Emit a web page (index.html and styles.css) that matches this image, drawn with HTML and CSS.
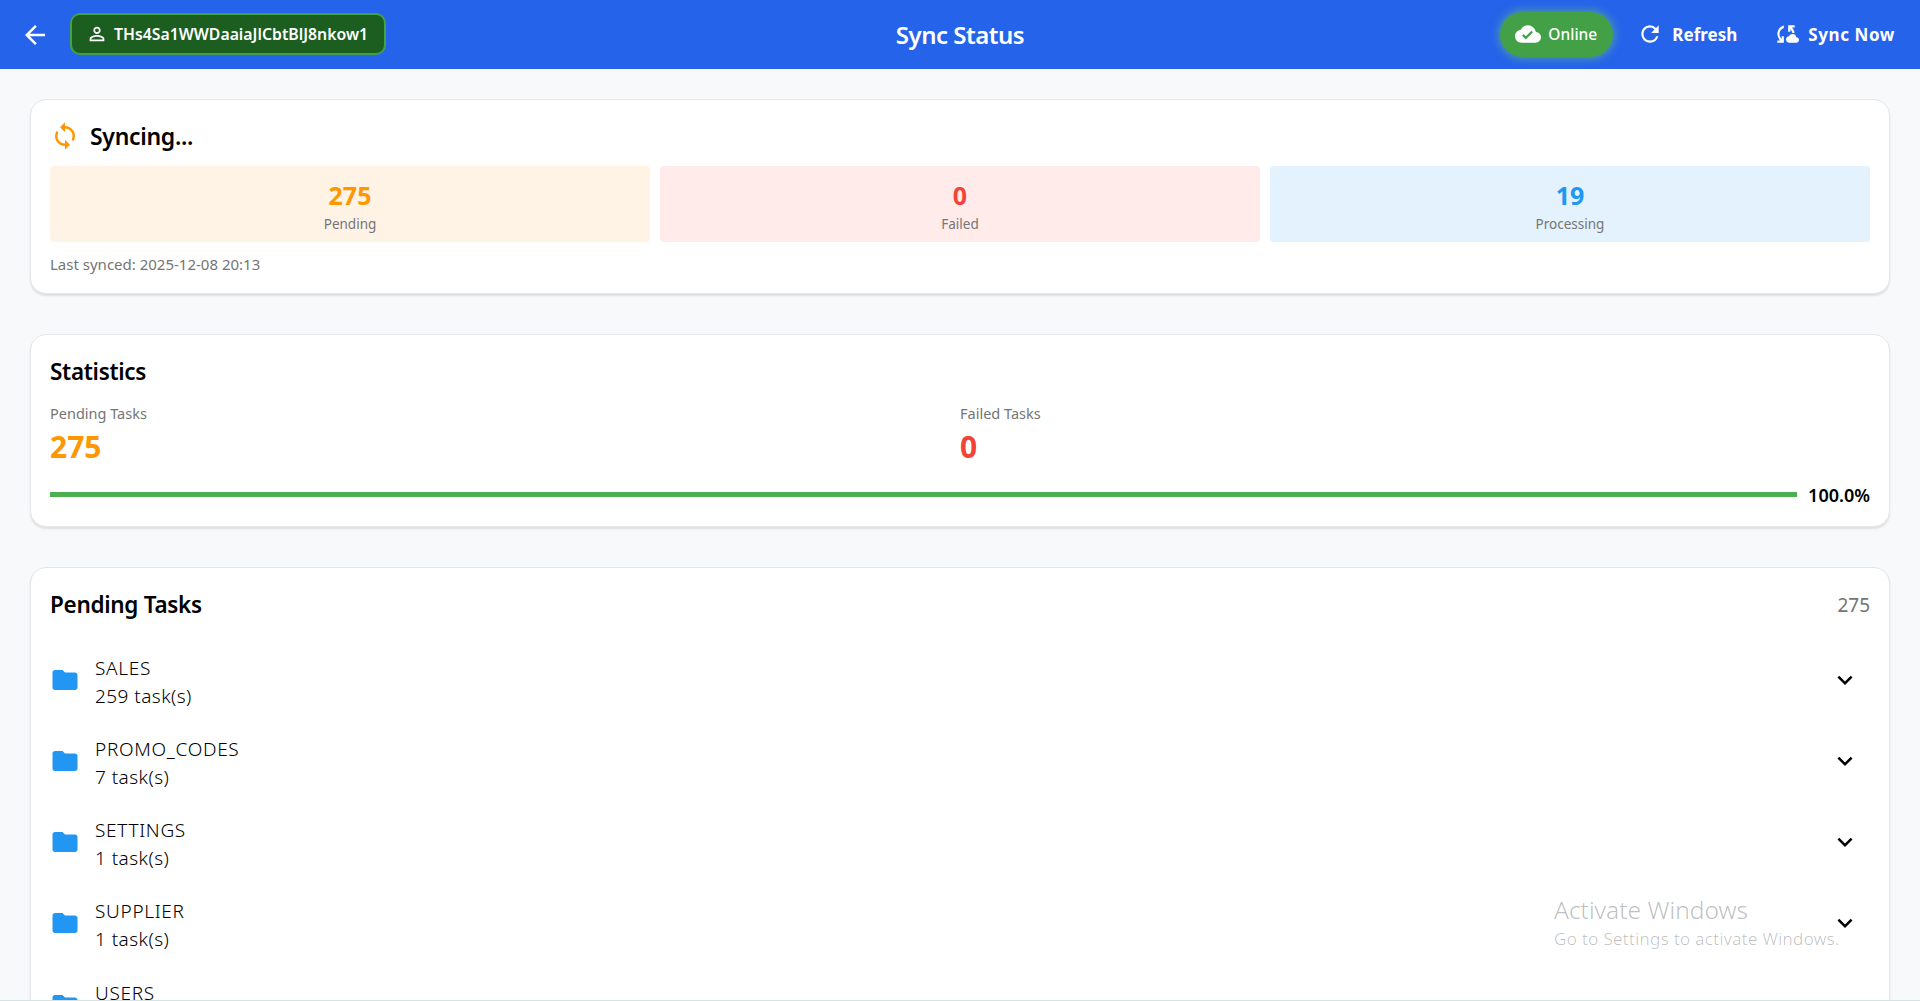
FILE: index.html
```html
<!DOCTYPE html>
<html lang="en">
<head>
<meta charset="utf-8">
<title>Sync Status</title>
<link rel="stylesheet" href="styles.css">
</head>
<body>
<div class="app">
<header class="topbar">
  <div class="bar-left">
    <svg class="ic-back" viewBox="0 0 24 24"><path d="M20 11H7.83l5.59-5.59L12 4l-8 8 8 8 1.41-1.41L7.83 13H20z"/></svg>
    <div class="user-chip">
      <svg class="ic-user" viewBox="0 0 24 24"><path d="M12 5.9a2.1 2.1 0 1 1 0 4.2 2.1 2.1 0 0 1 0-4.2m0 9c2.97 0 6.1 1.46 6.1 2.1v1.1H5.9V17c0-.64 3.13-2.1 6.1-2.1M12 4C9.79 4 8 5.79 8 8s1.79 4 4 4 4-1.79 4-4-1.79-4-4-4zm0 9c-2.67 0-8 1.34-8 4v3h16v-3c0-2.66-5.33-4-8-4z"/></svg>
      <span>THs4Sa1WWDaaiaJlCbtBlJ8nkow1</span>
    </div>
  </div>
  <h1 class="title">Sync Status</h1>
  <div class="bar-right">
    <div class="online">
      <svg class="ic-cloud" viewBox="0 0 24 24"><path d="M19.35 10.04A7.49 7.49 0 0 0 12 4C9.11 4 6.6 5.64 5.35 8.04A5.994 5.994 0 0 0 0 14c0 3.31 2.69 6 6 6h13c2.76 0 5-2.24 5-5 0-2.64-2.05-4.78-4.65-4.96zM10 17l-3.5-3.5 1.41-1.41L10 14.17l5.18-5.18 1.41 1.41L10 17z"/></svg>
      <span>Online</span>
    </div>
    <div class="action action-refresh">
      <svg class="ic-act" viewBox="0 0 24 24"><path d="M17.65 6.35A7.958 7.958 0 0 0 12 4c-4.42 0-7.99 3.58-7.99 8s3.57 8 7.99 8c3.73 0 6.84-2.55 7.73-6h-2.08A5.99 5.99 0 0 1 12 18c-3.31 0-6-2.69-6-6s2.69-6 6-6c1.66 0 3.14.69 4.22 1.78L13 11h7V4l-2.35 2.35z"/></svg>
      <span>Refresh</span>
    </div>
    <div class="action action-sync">
      <svg class="ic-act" viewBox="0 0 24 24"><path d="M21.5 14.98c-.02 0-.03 0-.05.01A3.5 3.5 0 0 0 18.01 12c-1.4 0-2.6.83-3.16 2.02C13.26 14.1 12 15.4 12 17c0 1.66 1.34 3 3 3l6.5-.02c1.38 0 2.5-1.12 2.5-2.5s-1.12-2.5-2.5-2.5zM10 4.26v2.09C7.67 7.18 6 9.39 6 12c0 1.77.78 3.34 2 4.44V14h2v6H4v-2h2.73A7.99 7.99 0 0 1 4 12c0-3.73 2.55-6.85 6-7.74zM20 6h-2.73c1.43 1.26 2.41 3.01 2.66 5h-2.02A6 6 0 0 0 16 7.56V10h-2V4h6v2z"/></svg>
      <span>Sync Now</span>
    </div>
  </div>
</header>
<main class="content">
  <section class="card card-status">
    <div class="status-head">
      <svg class="ic-syncing" viewBox="0 0 24 24"><path d="M12 4V1L8 5l4 4V6c3.31 0 6 2.69 6 6 0 1.01-.25 1.97-.7 2.8l1.46 1.46A7.93 7.93 0 0 0 20 12c0-4.42-3.58-8-8-8zm0 14c-3.31 0-6-2.69-6-6 0-1.01.25-1.97.7-2.8L5.24 7.74A7.93 7.93 0 0 0 4 12c0 4.42 3.58 8 8 8v3l4-4-4-4v3z"/></svg>
      <h2 class="h-status">Syncing...</h2>
    </div>
    <div class="tiles">
      <div class="tile tile-orange"><div class="tile-num">275</div><div class="tile-label">Pending</div></div>
      <div class="tile tile-red"><div class="tile-num">0</div><div class="tile-label">Failed</div></div>
      <div class="tile tile-blue"><div class="tile-num">19</div><div class="tile-label">Processing</div></div>
    </div>
    <div class="last">Last synced: 2025-12-08 20:13</div>
  </section>
  <section class="card card-stats">
    <h2 class="h-card">Statistics</h2>
    <div class="stats">
      <div class="stat"><div class="stat-label">Pending Tasks</div><div class="stat-num num-orange">275</div></div>
      <div class="stat"><div class="stat-label">Failed Tasks</div><div class="stat-num num-red">0</div></div>
    </div>
    <div class="progress"><div class="track"></div><span class="pct">100.0%</span></div>
  </section>
  <section class="card card-tasks">
    <div class="tasks-head"><h2 class="h-card">Pending Tasks</h2><span class="count">275</span></div>
    <div class="row"><svg class="ic-folder" viewBox="0 0 24 24"><path d="M10 4H4c-1.1 0-1.99.9-1.99 2L2 18c0 1.1.9 2 2 2h16c1.1 0 2-.9 2-2V8c0-1.1-.9-2-2-2h-8l-2-2z"/></svg><div class="row-text"><div class="row-name">SALES</div><div>259 task(s)</div></div><svg class="ic-chev" viewBox="0 0 24 24"><path d="M16.59 8.59 12 13.17 7.41 8.59 6 10l6 6 6-6z"/></svg></div>
    <div class="row"><svg class="ic-folder" viewBox="0 0 24 24"><path d="M10 4H4c-1.1 0-1.99.9-1.99 2L2 18c0 1.1.9 2 2 2h16c1.1 0 2-.9 2-2V8c0-1.1-.9-2-2-2h-8l-2-2z"/></svg><div class="row-text"><div class="row-name">PROMO_CODES</div><div>7 task(s)</div></div><svg class="ic-chev" viewBox="0 0 24 24"><path d="M16.59 8.59 12 13.17 7.41 8.59 6 10l6 6 6-6z"/></svg></div>
    <div class="row"><svg class="ic-folder" viewBox="0 0 24 24"><path d="M10 4H4c-1.1 0-1.99.9-1.99 2L2 18c0 1.1.9 2 2 2h16c1.1 0 2-.9 2-2V8c0-1.1-.9-2-2-2h-8l-2-2z"/></svg><div class="row-text"><div class="row-name">SETTINGS</div><div>1 task(s)</div></div><svg class="ic-chev" viewBox="0 0 24 24"><path d="M16.59 8.59 12 13.17 7.41 8.59 6 10l6 6 6-6z"/></svg></div>
    <div class="row"><svg class="ic-folder" viewBox="0 0 24 24"><path d="M10 4H4c-1.1 0-1.99.9-1.99 2L2 18c0 1.1.9 2 2 2h16c1.1 0 2-.9 2-2V8c0-1.1-.9-2-2-2h-8l-2-2z"/></svg><div class="row-text"><div class="row-name">SUPPLIER</div><div>1 task(s)</div></div><svg class="ic-chev" viewBox="0 0 24 24"><path d="M16.59 8.59 12 13.17 7.41 8.59 6 10l6 6 6-6z"/></svg></div>
    <div class="row"><svg class="ic-folder" viewBox="0 0 24 24"><path d="M10 4H4c-1.1 0-1.99.9-1.99 2L2 18c0 1.1.9 2 2 2h16c1.1 0 2-.9 2-2V8c0-1.1-.9-2-2-2h-8l-2-2z"/></svg><div class="row-text"><div class="row-name">USERS</div><div>1 task(s)</div></div><svg class="ic-chev" viewBox="0 0 24 24"><path d="M16.59 8.59 12 13.17 7.41 8.59 6 10l6 6 6-6z"/></svg></div>
  </section>
</main>
</div>
<div class="watermark"><div class="wm-title">Activate Windows</div><div class="wm-sub">Go to Settings to activate Windows.</div></div>
<div class="bottom-line"></div>
</body>
</html>
```
FILE: styles.css
```css
* { box-sizing: border-box; }
html, body { margin: 0; height: 100%; overflow: hidden; }
body { background: #f8f9fb; font-family: "Noto Sans", "Open Sans", sans-serif; color: #000; }
.app { display: flex; flex-direction: column; height: 1001px; overflow: hidden; }
.topbar { flex: none; height: 69px; background: #2563eb; color: #fff; display: grid; grid-template-columns: 1fr auto 1fr; align-items: center; padding: 0 25px; }
.bar-left, .bar-right { display: flex; align-items: center; }
.bar-right { justify-content: flex-end; }
.ic-back { width: 30px; height: 30px; fill: #fff; margin: 0 20px 0 -5px; }
.user-chip { width: 316px; height: 42px; background: #1b5e20; border: 2px solid #43a047; border-radius: 10px; display: flex; align-items: center; padding-left: 14px; gap: 6px; font-size: 15.8px; font-weight: 600; margin-top: -1px; }
.ic-user { width: 22px; height: 22px; fill: #fff; flex: none; }
.title { margin: 0; font-size: 24px; font-weight: 600; letter-spacing: -0.5px; }
.online { width: 113px; height: 45px; border-radius: 23px; background: #43a047; box-shadow: 0 0 9px 2px rgba(110,200,120,.5); display: flex; align-items: center; padding-left: 15px; gap: 7px; font-size: 15.5px; font-weight: 500; margin-top: -1px; }
.ic-cloud { width: 26px; height: 26px; fill: #fff; flex: none; }
.action { display: flex; align-items: center; gap: 9px; font-size: 17px; font-weight: 700; margin-top: -1px; }
.action-refresh { margin-left: 24px; }
.action-sync { margin-left: 36px; letter-spacing: .6px; }
.ic-act { width: 26px; height: 26px; fill: #fff; }
.content { flex: 1; padding: 30px 30px 0; display: flex; flex-direction: column; gap: 40px; overflow: hidden; }
.card { flex: none; background: #fff; border: 1px solid #e5e7eb; border-radius: 16px; box-shadow: 0 2px 2px rgba(0,0,0,.1); padding: 0 19px; }
.card-status { height: 195px; }
.status-head { display: flex; align-items: center; gap: 10px; height: 66px; padding-top: 5px; }
.ic-syncing { width: 30px; height: 30px; fill: #ff9800; flex: none; }
.h-status { margin: 0; font-size: 23px; font-weight: 600; letter-spacing: -0.3px; }
.tiles { display: grid; grid-template-columns: repeat(3, 1fr); gap: 10px; }
.tile { height: 76px; border-radius: 4px; text-align: center; padding-top: 14px; }
.tile-orange { background: #fff3e6; }
.tile-red { background: #ffebe9; }
.tile-blue { background: #e4f2fd; }
.tile-num { font-size: 25px; font-weight: 700; line-height: 31px; }
.tile-orange .tile-num { color: #ff9800; }
.tile-red .tile-num { color: #f44336; }
.tile-blue .tile-num { color: #2196f3; }
.tile-label { font-size: 13.5px; line-height: 20px; color: #757575; margin-top: 3px; }
.last { font-size: 15px; line-height: 20px; color: #757575; margin-top: 12px; }
.card-stats { height: 193px; }
.h-card { margin: 0; font-size: 22.5px; font-weight: 600; letter-spacing: -0.3px; }
.card-stats .h-card { line-height: 30px; padding-top: 22px; box-sizing: content-box; }
.stats { display: grid; grid-template-columns: 1fr 1fr; margin-top: 16px; }
.stat-label { font-size: 14.5px; line-height: 20px; color: #757575; }
.stat-num { font-size: 30px; font-weight: 700; line-height: 48px; }
.num-orange { color: #ff9800; }
.num-red { color: #f44336; }
.progress { display: flex; align-items: center; gap: 11px; margin-top: 9px; }
.track { flex: 1; height: 5px; background: #4caf50; }
.pct { font-size: 18px; line-height: 25px; font-weight: 600; padding-top: 3px; }
.card-tasks { flex: 1 0 auto; border-radius: 16px 16px 0 0; }
.tasks-head { display: flex; justify-content: space-between; align-items: center; height: 71px; padding-top: 2px; }
.count { font-size: 19px; color: #757575; }
.row { display: flex; align-items: center; height: 81.25px; }
.ic-folder { width: 30px; height: 30px; fill: #2196f3; flex: none; margin-right: 15px; }
.row-text { flex: 1; font-size: 19px; line-height: 28px; color: #000; padding-top: 4px; font-weight: 300; letter-spacing: .45px; }
.row-name { letter-spacing: .7px; }
.ic-chev { width: 30px; height: 30px; fill: #000; flex: none; margin-right: 10px; }
.watermark { position: absolute; left: 1554px; top: 892px; color: rgba(0,0,0,.27); font-weight: 300; }
.wm-title { font-size: 24.5px; line-height: 36px; }
.wm-sub { font-size: 17px; line-height: 22px; letter-spacing: .4px; }
.bottom-line { position: absolute; left: 0; right: 0; bottom: 0; height: 1px; background: #d5e3e3; }
```
